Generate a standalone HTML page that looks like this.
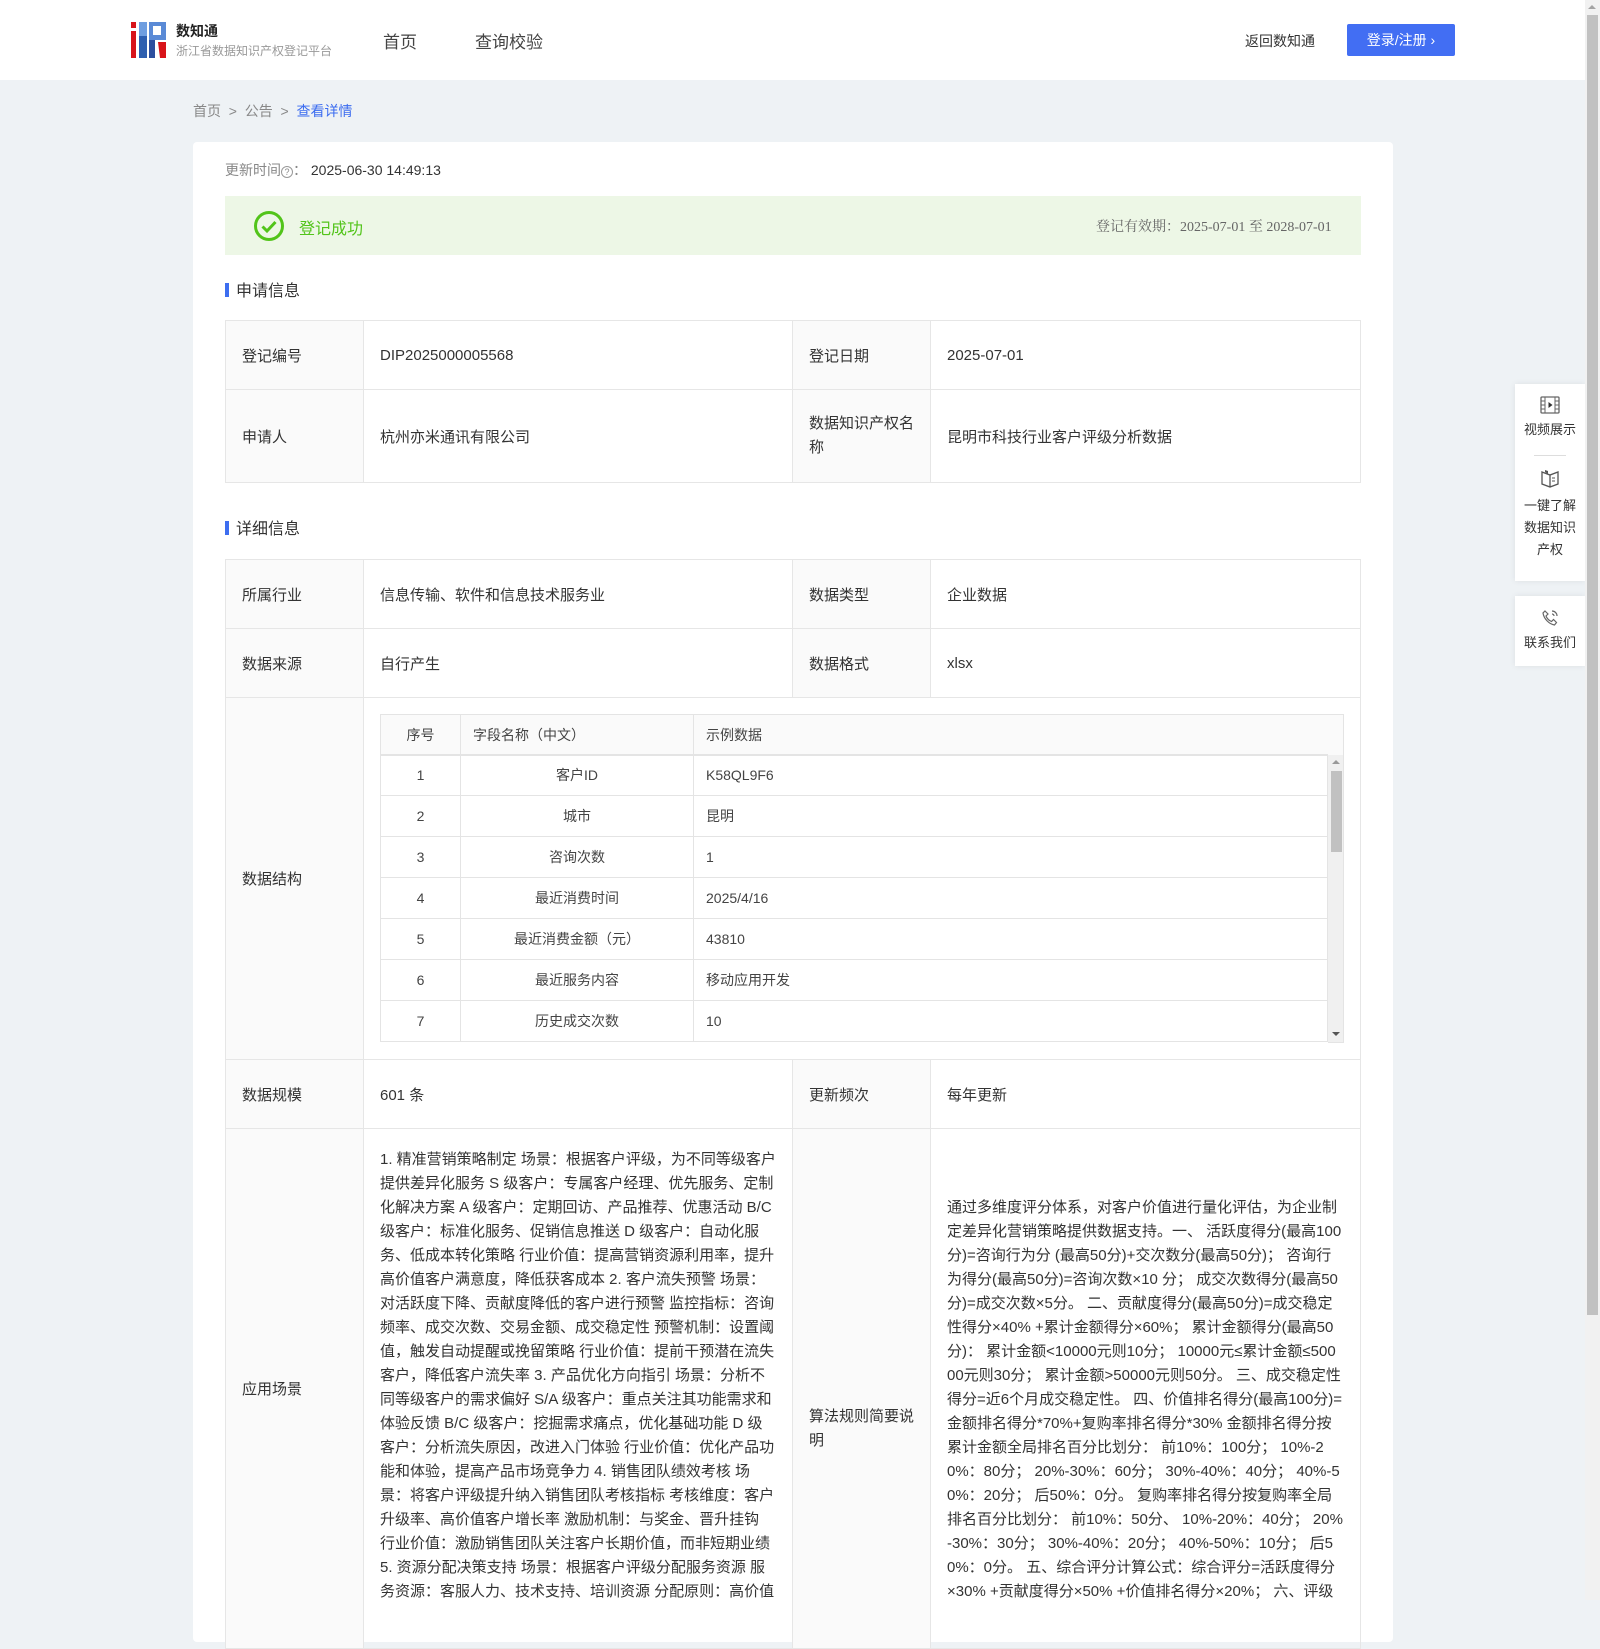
<!DOCTYPE html>
<html><head><meta charset="utf-8"><style>
*{box-sizing:border-box;margin:0;padding:0}
body{width:1600px;height:1600px;overflow:hidden;background:#eef2f5;font-family:"Liberation Sans","Noto Sans CJK SC",sans-serif;color:#333;position:relative}
.hdr{position:absolute;left:0;top:0;width:1585px;height:80px;background:#fff}
.abs{position:absolute;white-space:nowrap}
.card{position:absolute;left:193px;top:142px;width:1200px;height:1500px;background:#fff;border-radius:4px}
table{border-collapse:collapse;position:absolute;left:225px;width:1136px;font-size:15px}
td{border:1px solid #e6e6e6;padding:0 16px;vertical-align:middle}
td.l{background:#fafafa;width:138px}
td.v{width:429px}
.sec{position:absolute;left:225px;font-size:16px;color:#333}
.sec:before{content:"";display:inline-block;width:4px;height:14px;background:#3d6ef0;margin-right:7px;vertical-align:-1px}
table.inner{position:absolute;font-size:14px;table-layout:fixed}
.inner td{border:1px solid #e4e4e4;height:41px;padding:0 12px;color:#444}
.lines div{height:24px;line-height:24px;white-space:nowrap}
.side{position:absolute;left:1515px;width:70px;background:#fff;box-shadow:0 0 6px rgba(0,0,0,.08);text-align:center;font-size:13px;color:#333;line-height:22px}
</style></head><body>
<div class="hdr">
  <svg class="abs" style="left:131px;top:22px" width="35" height="36" viewBox="0 0 35 36">
    <rect x="0" y="0" width="5" height="6" fill="#d8141a"/><rect x="0" y="9" width="5" height="27" fill="#d8141a"/>
    <rect x="8" y="0" width="8" height="36" fill="#2e5fb0"/><rect x="8" y="0" width="8" height="14" fill="#6f9ee0"/>
    <rect x="18" y="0" width="17" height="18" fill="#5a8ad6"/><rect x="22" y="4" width="8" height="9" fill="#fff"/>
    <rect x="18" y="18" width="6" height="18" fill="#2d4f9e"/><polygon points="27,20 35,20 35,36 29,36" fill="#d8141a"/>
  </svg>
  <div class="abs" style="left:176px;top:21px;font-size:14px;font-weight:bold;color:#222">数知通</div>
  <div class="abs" style="left:176px;top:42px;font-size:12px;color:#999">浙江省数据知识产权登记平台</div>
  <div class="abs" style="left:383px;top:28px;font-size:17px;color:#444">首页</div>
  <div class="abs" style="left:475px;top:28px;font-size:17px;color:#444">查询校验</div>
  <div class="abs" style="left:1245px;top:31px;font-size:14px;color:#333">返回数知通</div>
  <div class="abs" style="left:1347px;top:24px;width:108px;height:32px;background:#426ef3;border-radius:2px;color:#fff;font-size:14px;line-height:32px;text-align:center">登录/注册 ›</div>
</div>
<div class="abs" style="left:193px;top:101px;font-size:14px;color:#888">首页 &nbsp;&gt;&nbsp; 公告 &nbsp;&gt;&nbsp; <span style="color:#3b6cf0">查看详情</span></div>
<div class="card"></div>
<div class="abs" style="left:225px;top:160px;font-size:14px;color:#888">更新时间<span style="display:inline-block;width:12px;height:12px;border:1px solid #999;border-radius:50%;font-size:9px;line-height:10px;text-align:center;vertical-align:0">?</span>： <span style="color:#333">2025-06-30 14:49:13</span></div>
<div class="abs" style="left:225px;top:196px;width:1136px;height:59px;background:#edf7e6"></div>
<svg class="abs" style="left:253px;top:210px" width="32" height="32" viewBox="0 0 32 32"><circle cx="16" cy="16" r="13.5" fill="none" stroke="#52c41a" stroke-width="3"/><path d="M9.5 16.5l4.5 4.5 8.5-9" fill="none" stroke="#52c41a" stroke-width="3"/></svg>
<div class="abs" style="left:299px;top:215px;font-size:16px;color:#52c41a">登记成功</div>
<div class="abs" style="left:1096px;top:216px;font-size:14px;color:#666;font-family:'Liberation Serif','Noto Serif CJK SC',serif">登记有效期：2025-07-01 至 2028-07-01</div>
<div class="sec" style="top:277px">申请信息</div>
<table style="top:320px">
<tr style="height:69px"><td class="l">登记编号</td><td class="v">DIP2025000005568</td><td class="l">登记日期</td><td>2025-07-01</td></tr>
<tr style="height:93px"><td class="l">申请人</td><td class="v">杭州亦米通讯有限公司</td><td class="l" style="line-height:24px">数据知识产权名称</td><td>昆明市科技行业客户评级分析数据</td></tr>
</table>
<div class="sec" style="top:515px">详细信息</div>
<table style="top:559px">
<tr style="height:69px"><td class="l">所属行业</td><td class="v">信息传输、软件和信息技术服务业</td><td class="l">数据类型</td><td>企业数据</td></tr>
<tr style="height:69px"><td class="l">数据来源</td><td class="v">自行产生</td><td class="l">数据格式</td><td>xlsx</td></tr>
<tr style="height:362px"><td class="l">数据结构</td><td colspan="3"></td></tr>
<tr style="height:69px"><td class="l">数据规模</td><td class="v">601 条</td><td class="l">更新频次</td><td>每年更新</td></tr>
<tr style="height:520px"><td class="l">应用场景</td><td class="v" style="vertical-align:top;padding-top:19px"><div class="lines">
<div>1. 精准营销策略制定 场景：根据客户评级，为不同等级客户</div>
<div>提供差异化服务 S 级客户：专属客户经理、优先服务、定制</div>
<div>化解决方案 A 级客户：定期回访、产品推荐、优惠活动 B/C</div>
<div>级客户：标准化服务、促销信息推送 D 级客户：自动化服</div>
<div>务、低成本转化策略 行业价值：提高营销资源利用率，提升</div>
<div>高价值客户满意度，降低获客成本 2. 客户流失预警 场景：</div>
<div>对活跃度下降、贡献度降低的客户进行预警 监控指标：咨询</div>
<div>频率、成交次数、交易金额、成交稳定性 预警机制：设置阈</div>
<div>值，触发自动提醒或挽留策略 行业价值：提前干预潜在流失</div>
<div>客户，降低客户流失率 3. 产品优化方向指引 场景：分析不</div>
<div>同等级客户的需求偏好 S/A 级客户：重点关注其功能需求和</div>
<div>体验反馈 B/C 级客户：挖掘需求痛点，优化基础功能 D 级</div>
<div>客户：分析流失原因，改进入门体验 行业价值：优化产品功</div>
<div>能和体验，提高产品市场竞争力 4. 销售团队绩效考核 场</div>
<div>景：将客户评级提升纳入销售团队考核指标 考核维度：客户</div>
<div>升级率、高价值客户增长率 激励机制：与奖金、晋升挂钩</div>
<div>行业价值：激励销售团队关注客户长期价值，而非短期业绩</div>
<div>5. 资源分配决策支持 场景：根据客户评级分配服务资源 服</div>
<div>务资源：客服人力、技术支持、培训资源 分配原则：高价值</div>
</div></td><td class="l" style="line-height:24px;vertical-align:top;padding-top:276px">算法规则简要说明</td><td style="vertical-align:top;padding-top:67px"><div class="lines">
<div>通过多维度评分体系，对客户价值进行量化评估，为企业制</div>
<div>定差异化营销策略提供数据支持。一、 活跃度得分(最高100</div>
<div>分)=咨询行为分 (最高50分)+交次数分(最高50分)； 咨询行</div>
<div>为得分(最高50分)=咨询次数×10 分； 成交次数得分(最高50</div>
<div>分)=成交次数×5分。 二、贡献度得分(最高50分)=成交稳定</div>
<div>性得分×40% +累计金额得分×60%； 累计金额得分(最高50</div>
<div>分)： 累计金额&lt;10000元则10分； 10000元≤累计金额≤500</div>
<div>00元则30分； 累计金额&gt;50000元则50分。 三、成交稳定性</div>
<div>得分=近6个月成交稳定性。 四、价值排名得分(最高100分)=</div>
<div>金额排名得分*70%+复购率排名得分*30% 金额排名得分按</div>
<div>累计金额全局排名百分比划分： 前10%：100分； 10%-2</div>
<div>0%：80分； 20%-30%：60分； 30%-40%：40分； 40%-5</div>
<div>0%：20分； 后50%：0分。 复购率排名得分按复购率全局</div>
<div>排名百分比划分： 前10%：50分、 10%-20%：40分； 20%</div>
<div>-30%：30分； 30%-40%：20分； 40%-50%：10分； 后5</div>
<div>0%：0分。 五、综合评分计算公式：综合评分=活跃度得分</div>
<div>×30% +贡献度得分×50% +价值排名得分×20%； 六、评级</div>
</div></td></tr>
</table>
<table class="inner" style="left:380px;top:714px;width:964px">
<tr style="background:#fafafa"><td style="width:80px;text-align:center">序号</td><td style="width:233px">字段名称（中文）</td><td>示例数据</td></tr>
</table>
<table class="inner" style="left:380px;top:754px;width:948px">
<tr><td style="width:80px;text-align:center">1</td><td style="width:233px;text-align:center">客户ID</td><td>K58QL9F6</td></tr>
<tr><td style="text-align:center">2</td><td style="text-align:center">城市</td><td>昆明</td></tr>
<tr><td style="text-align:center">3</td><td style="text-align:center">咨询次数</td><td>1</td></tr>
<tr><td style="text-align:center">4</td><td style="text-align:center">最近消费时间</td><td>2025/4/16</td></tr>
<tr><td style="text-align:center">5</td><td style="text-align:center">最近消费金额（元）</td><td>43810</td></tr>
<tr><td style="text-align:center">6</td><td style="text-align:center">最近服务内容</td><td>移动应用开发</td></tr>
<tr><td style="text-align:center">7</td><td style="text-align:center">历史成交次数</td><td>10</td></tr>
</table>
<div class="abs" style="left:1328px;top:755px;width:16px;height:288px;background:#f0f0f0;border-bottom:1px solid #e4e4e4;border-right:1px solid #e4e4e4"></div>
<div class="abs" style="left:1331px;top:771px;width:11px;height:81px;background:#c1c1c1"></div>
<div class="abs" style="left:1332px;top:760px;width:0;height:0;border:4px solid transparent;border-bottom:4px solid #999;border-top:none"></div>
<div class="abs" style="left:1332px;top:1032px;width:0;height:0;border:4px solid transparent;border-top:4px solid #555;border-bottom:none"></div>
<div class="side" style="top:384px;height:197px">
  <svg style="margin-top:12px" width="20" height="18" viewBox="0 0 20 18"><rect x="1" y="1" width="18" height="16" rx="1" fill="none" stroke="#666" stroke-width="1.3"/><path d="M5 1v16M15 1v16M1 5h4M1 9h4M1 13h4M15 5h4M15 9h4M15 13h4" stroke="#666" stroke-width="1"/><path d="M8.5 6v6l4-3z" fill="#333"/></svg>
  <div style="margin-top:-2px">视频展示</div>
  <div style="width:32px;height:1px;background:#ddd;margin:14px auto 12px"></div>
  <svg width="20" height="20" viewBox="0 0 20 20"><path d="M2 4l8 3 8-3v12l-8 3-8-3z M10 7v12" fill="none" stroke="#555" stroke-width="1.3"/><path d="M5 4V2l3 1v3" fill="#555"/><path d="M12 10h3M12 13h3" stroke="#555"/></svg>
  <div>一键了解<br>数据知识<br>产权</div>
</div>
<div class="side" style="top:596px;height:70px">
  <svg style="margin-top:12px" width="20" height="20" viewBox="0 0 20 20"><path d="M5 3l3 3-2 2c1 2.5 3 4.5 5.5 5.5l2-2 3 3-2 2.5C9 16 4 11 3 5z" fill="none" stroke="#666" stroke-width="1.2"/><path d="M12 3a5 5 0 015 5M12 6a2 2 0 012 2" fill="none" stroke="#666" stroke-width="1.2"/></svg>
  <div style="margin-top:-3px">联系我们</div>
</div>
<div class="abs" style="left:1585px;top:0;width:15px;height:1600px;background:#f1f1f1"></div>
<div class="abs" style="left:1587px;top:15px;width:11px;height:1300px;background:#c1c1c1"></div>
<div class="abs" style="left:1588px;top:5px;width:0;height:0;border:4px solid transparent;border-bottom:4px solid #a3a3a3;border-top:none"></div>
</body></html>
